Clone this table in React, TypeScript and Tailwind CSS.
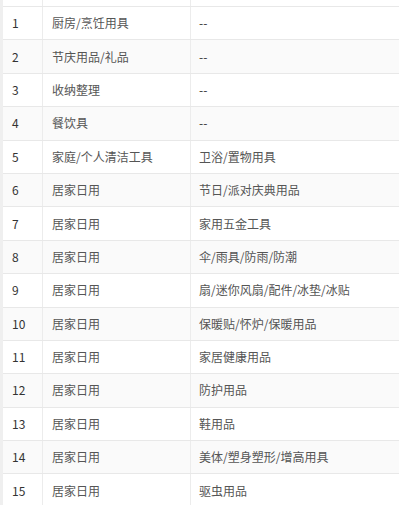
import React from "react";

const rows: [string, string, string][] = [
  ["1", "厨房/烹饪用具", "--"],
  ["2", "节庆用品/礼品", "--"],
  ["3", "收纳整理", "--"],
  ["4", "餐饮具", "--"],
  ["5", "家庭/个人清洁工具", "卫浴/置物用具"],
  ["6", "居家日用", "节日/派对庆典用品"],
  ["7", "居家日用", "家用五金工具"],
  ["8", "居家日用", "伞/雨具/防雨/防潮"],
  ["9", "居家日用", "扇/迷你风扇/配件/冰垫/冰贴"],
  ["10", "居家日用", "保暖贴/怀炉/保暖用品"],
  ["11", "居家日用", "家居健康用品"],
  ["12", "居家日用", "防护用品"],
  ["13", "居家日用", "鞋用品"],
  ["14", "居家日用", "美体/塑身塑形/增高用具"],
  ["15", "居家日用", "驱虫用品"],
];

export default function App() {
  return (
    <div
      className="flex w-[399px] h-[505px] overflow-hidden bg-white text-[12px] text-[#555]"
      style={{ fontFamily: '"Microsoft YaHei", "Noto Sans CJK SC", "Noto Sans", sans-serif' }}
    >
      <div className="w-[3px] shrink-0 bg-[#efefef]" />
      <div className="flex-1 flex flex-col">
        <div className="h-[7px] shrink-0 flex border-b border-[#e8e8e8]">
          <div className="w-[40px] border-r border-[#ececec]" />
          <div className="w-[148px] border-r border-[#ececec]" />
          <div className="flex-1" />
        </div>
        {rows.map(([n, a, b], i) => (
          <div
            key={n}
            className={`h-[33.4px] shrink-0 flex items-center border-b border-[#e8e8e8] ${
              i % 2 === 1 ? "bg-[#fafafa]" : "bg-white"
            }`}
          >
            <div className="w-[40px] h-full flex items-center pl-[9px] border-r border-[#ececec] text-[#333]">
              {n}
            </div>
            <div className="w-[148px] h-full flex items-center pl-[9px] border-r border-[#ececec]">
              {a}
            </div>
            <div className={`flex-1 h-full flex items-center pl-[8px] ${b === "--" ? "text-[#333]" : ""}`}>
              {b}
            </div>
          </div>
        ))}
      </div>
    </div>
  );
}
